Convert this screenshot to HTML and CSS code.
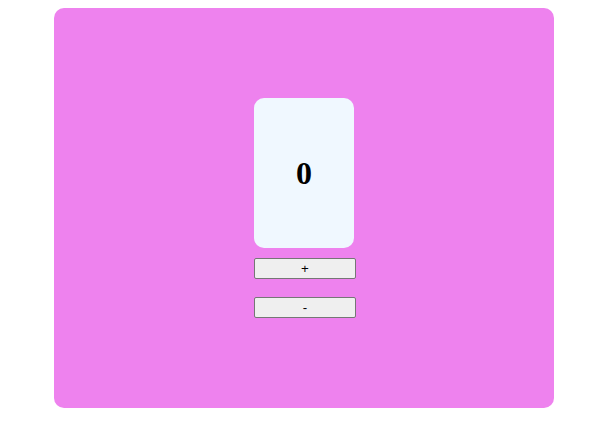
FILE: index.html
```html
<!DOCTYPE html>
<html>
<head>
<meta charset="utf-8">
<link rel="stylesheet" href="styles.css">
</head>
<body>
<div class="app">
  <div class="stack">
    <div class="card"><span class="count">0</span></div>
    <button class="btn btn-inc">+</button>
    <button class="btn btn-dec">-</button>
  </div>
</div>
</body>
</html>
```
FILE: styles.css
```css
html, body { background: #ffffff; }
body { margin: 8px 8px 8px 54px; font-family: "Liberation Serif", serif; }
.app {
  width: 500px;
  height: 400px;
  background: #ee82ee;
  border-radius: 10px;
  display: flex;
  align-items: center;
  justify-content: center;
}
.stack {
  width: 100px;
  display: flex;
  flex-direction: column;
  align-items: flex-start;
}
.card {
  width: 100px;
  height: 150px;
  background: #f0f8ff;
  border-radius: 10px;
  display: flex;
  align-items: center;
  justify-content: center;
}
.count {
  font-family: "Liberation Serif", serif;
  font-weight: bold;
  font-size: 32px;
  color: #000;
}
.btn {
  box-sizing: border-box;
  flex: none;
  width: 102px;
  height: 21px;
  padding: 0;
  font-family: "Liberation Sans", Arial, sans-serif;
  font-size: 13.33px;
  color: #000;
  background: #efefef;
  border: 1px solid #767676;
  border-radius: 2px;
}
.btn-inc { margin-top: 10px; }
.btn-dec { margin-top: 18px; }
```
